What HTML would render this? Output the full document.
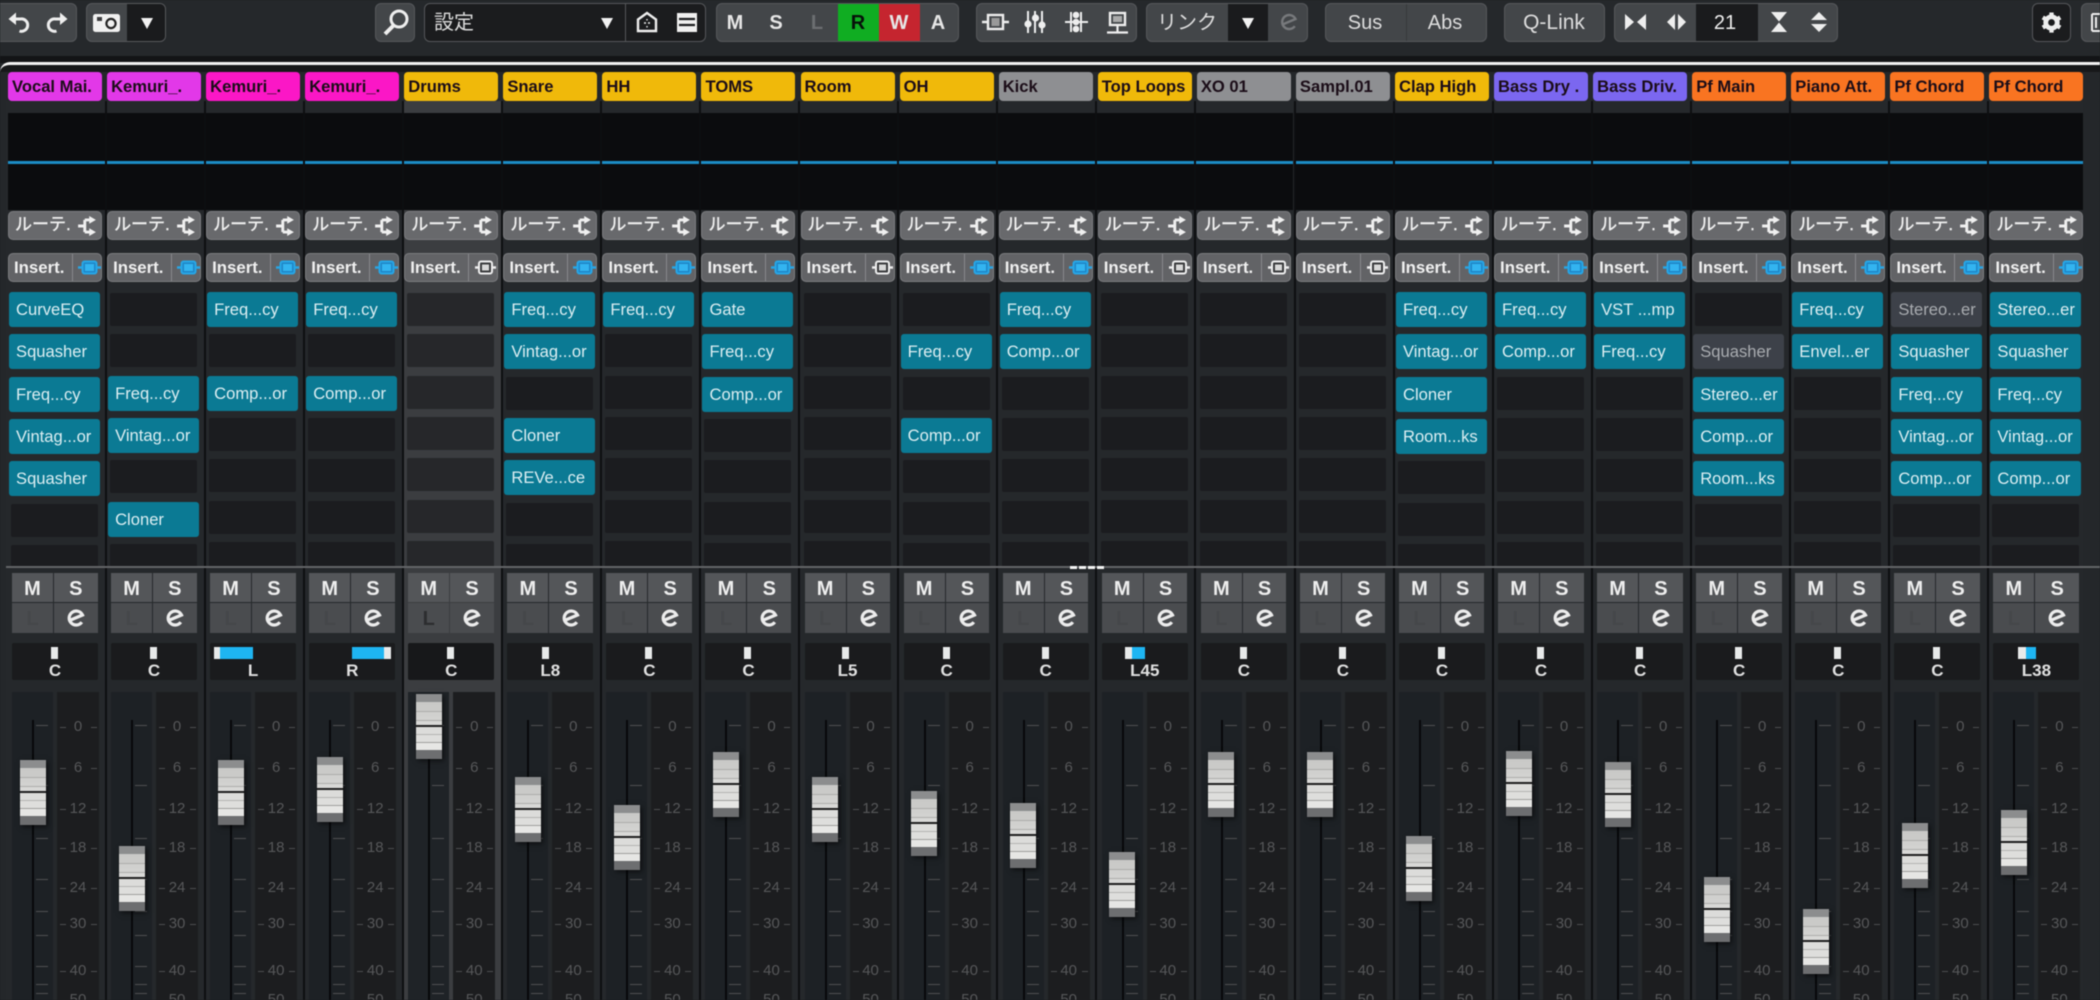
<!DOCTYPE html>
<html><head><meta charset="utf-8"><style>
html,body{margin:0;padding:0;background:#1c1e21}
#a{position:relative;width:2100px;height:1000px;overflow:hidden;background:#24272a;font-family:"Liberation Sans","Noto Sans CJK JP",sans-serif;filter:blur(.45px)}
#top{position:absolute;left:0;top:0;width:2100px;height:56px;background:#25282b}
#dk{position:absolute;left:0;top:56px;width:2100px;height:7px;background:#131416}
#wl{position:absolute;left:0;top:62px;width:2100px;height:10px;border-top:3px solid #f2f2f2;border-top-left-radius:10px;box-sizing:border-box;background:#17181a}
.g{position:absolute;top:3px;height:39px;box-sizing:border-box;background:#434649;border:1px solid #56585b;border-radius:6px;color:#e6e6e6;overflow:hidden}
.g svg,.ab{position:absolute}
.tx{position:absolute;top:0;line-height:38px;font-size:20px;transform:translateX(-50%);white-space:nowrap}
.bd{font-weight:bold}
.dkb{position:absolute;top:0;bottom:0;background:#1a1b1d}
.c{position:absolute;top:0;width:99.07px;height:1000px}
.st{position:absolute;left:5.6px;right:-5.6px;top:101px;bottom:0;background:#25282b;border-left:2px solid #0d0e10;box-sizing:border-box}
.c.d .st{background:#3b3d40}
.n{position:absolute;left:8px;top:72px;width:94px;height:29px;border-radius:4px;font:bold 16.6px/30px "Liberation Sans",sans-serif;color:#1b0d18;padding-left:4px;box-sizing:border-box;white-space:nowrap;overflow:hidden}
.mt{position:absolute;left:7.6px;right:-5.6px;top:113px;height:97px;background:#0b0c0e}
.bl{position:absolute;left:7.6px;right:-5.6px;top:161px;height:3px;background:#1c8cc4}
.r,.i{position:absolute;left:8px;width:94px;box-sizing:border-box;border:1px solid #7b7c7f;border-radius:5px;color:#f0f0f0;white-space:nowrap}
.r{top:211px;height:29px;background:#68696c;font-size:17px;line-height:26px;padding-left:6px;-webkit-text-stroke:.4px #f0f0f0}
.i{top:253px;height:29px;background:#626366;font-size:16.8px;font-weight:bold;line-height:27px;padding-left:5px}
.i:after{content:"";position:absolute;left:63px;top:0;bottom:0;width:1px;background:#87888b}
.r svg{position:absolute;left:69px;top:4px;width:18px;height:20px}
.i svg{position:absolute;left:69px;top:6px;width:23px;height:15px}
.sl{position:absolute;left:9px;top:292px;width:91px;height:273.5px;overflow:hidden}
.sl p{margin:0 0 7.33px 2px;height:33px;width:87px;margin-top:1px;background:#1b1c1f;border-radius:2px;box-sizing:border-box;margin-bottom:8.33px}
.sl p.t{margin:0 0 7.33px 0;height:35px;width:91px;background:#0b7a94;border-radius:3px;color:#dceef2;font-size:16.6px;line-height:36px;padding-left:7px;white-space:nowrap;overflow:hidden}
.sl p.y{margin:0 0 7.33px 0;height:35px;width:91px;background:#3d4149;border-radius:3px;color:#a9acb0;font-size:16.6px;line-height:36px;padding-left:7px;white-space:nowrap;overflow:hidden}
.c.d .sl p:not(.t){background:#26272a}
.ms{position:absolute;left:12px;top:573px;width:85.5px;height:60px;display:grid;grid-template-columns:41px 43.5px;grid-template-rows:29px 30px;gap:1px;font:bold 20px/32px "Liberation Sans",sans-serif;color:#eee;text-align:center}
.ms b{background:#545659;display:block;position:relative}
.ms b.l,.ms b.e{background:#4a4c4f}
.ms b.l{color:#45474a}
.c.d .ms b.l{color:#2c2d2f}
.ms svg{position:absolute;left:12px;top:6px;width:20px;height:18px}
.p{position:absolute;left:12px;top:643px;width:86px;height:37px;background:#1a1b1d;border-radius:2px;color:#e0e0e0;font:bold 17px/1 "Liberation Sans",sans-serif;text-align:center;padding-top:19px;box-sizing:border-box}
.p i{position:absolute;top:4px;height:12px;background:#e8eaea}
.p i.b{background:#1eb5f2}
.ft{position:absolute;left:12px;top:692px;width:41px;height:308px;background:linear-gradient(#07080a,#07080a) 20px 28px/2px 100% no-repeat,linear-gradient(#4f5052,#4f5052) 24px 33px/12px 1px no-repeat,linear-gradient(#4f5052,#4f5052) 24px 93px/12px 1px no-repeat,linear-gradient(#4f5052,#4f5052) 24px 146px/12px 1px no-repeat,linear-gradient(#4f5052,#4f5052) 24px 187px/12px 1px no-repeat,linear-gradient(#4f5052,#4f5052) 24px 219px/12px 1px no-repeat,linear-gradient(#4f5052,#4f5052) 24px 243px/12px 1px no-repeat,linear-gradient(#4f5052,#4f5052) 24px 274px/12px 1px no-repeat,linear-gradient(#4f5052,#4f5052) 24px 292px/12px 1px no-repeat,linear-gradient(#4f5052,#4f5052) 24px 301px/12px 1px no-repeat,#1d2125}
.sc{position:absolute;left:57px;top:692px;width:42px;height:308px;background:#1c1d1f}
.c.d .ft{background-color:#1f2327}
.sc b{position:absolute;left:0;width:42px;text-align:center;font:normal 15px/16px "Liberation Sans",sans-serif;color:#565759}
.sc b:before,.sc b:after{content:"";position:absolute;top:8px;width:6px;height:1px;background:#4c4d4f}
.sc b:before{left:3px}.sc b:after{right:2px}
.sc b:nth-child(1){top:27px}.sc b:nth-child(2){top:68px}.sc b:nth-child(3){top:109px}.sc b:nth-child(4){top:148px}.sc b:nth-child(5){top:188px}.sc b:nth-child(6){top:224px}.sc b:nth-child(7){top:271px}.sc b:nth-child(8){top:300px}
.f{position:absolute;left:19.5px;width:26px;height:65px;box-shadow:2px 2px 5px rgba(0,0,0,.55);background:linear-gradient(#8c8d8e 0,#8c8d8e 8px,#c9c9c7 8px,#cbcbc9 17px,#ababa9 17px,#ababa9 18px,#cfcfcd 18px,#d3d3d1 26px,#aeaeac 26px,#aeaeac 27px,#d8d8d6 27px,#d8d8d6 31px,#1e1e1e 31px,#1e1e1e 33px,#dcdcda 33px,#dcdcda 40px,#b4b4b2 40px,#b4b4b2 41px,#dededc 41px,#dededc 48px,#a0a09e 48px,#a0a09e 49px,#e6e6e4 49px,#e6e6e4 56px,#6d6e70 56px,#6d6e70 65px)}
#sep{position:absolute;left:6px;right:0;top:565.5px;height:2.5px;background:#626467}
#sep i{position:absolute;top:0;height:3px;width:7px;background:#f4f4f4}
</style></head><body><div id="a">
<svg width="0" height="0" style="position:absolute"><defs>
<symbol id="rt" viewBox="0 0 16 18"><path d="M0 9H6M6 3.500V14.500M6 3.500H12M6 14.500H12" stroke="#f0f0f0" stroke-width="2.600" fill="none"/><path d="M10 0L16 3.500 10 7zM10 11L16 14.500 10 18z" fill="#f0f0f0"/></symbol>
<symbol id="ib" viewBox="0 0 23 15"><rect x="4.500" y="1.500" width="14" height="12" rx="2" fill="#1f86c6" stroke="#27a6e6" stroke-width="2"/><rect x="7" y="4" width="9" height="7" fill="#33b4f0"/><path d="M0 7.500H4M19 7.500H23" stroke="#27a6e6" stroke-width="2.400"/></symbol>
<symbol id="iw" viewBox="0 0 23 15"><rect x="5" y="1.500" width="13" height="12" rx="2" fill="#3a3b3d" stroke="#eee" stroke-width="2"/><rect x="8" y="4.500" width="7" height="6" fill="#d8d8d8"/><path d="M1 7.500H5M18 7.500H22" stroke="#eee" stroke-width="2.400"/></symbol>
<symbol id="e" viewBox="0 0 20 18"><path d="M3.500 11.500L16.500 6A7 7 0 1 0 15.800 13.200" fill="none" stroke="#ececec" stroke-width="3.200"/></symbol>
</defs></svg>
<div id="top"></div><div id="dk"></div><div id="wl"></div>

<div class="g" style="left:-6px;width:83px"></div>
<svg class="ab" style="left:7px;top:10px" width="24" height="24" viewBox="0 0 24 24"><path d="M7 9H13.500A6.200 6.200 0 1 1 12.500 21" fill="none" stroke="#eee" stroke-width="3"/><path d="M9 2.500V15L1.500 9z" fill="#eee"/></svg>
<svg class="ab" style="left:45px;top:10px" width="24" height="24" viewBox="0 0 24 24"><path d="M17 9H10.500A6.200 6.200 0 1 0 11.500 21" fill="none" stroke="#eee" stroke-width="3"/><path d="M15 2.500V15L22.500 9z" fill="#eee"/></svg>
<div class="g" style="left:86px;width:80px"><div class="dkb" style="left:40px;right:0"></div></div>
<svg class="ab" style="left:93px;top:14px" width="27" height="18" viewBox="0 0 27 18"><rect width="27" height="18" rx="2.500" fill="#f0f0f0"/><rect x="4" y="3" width="5" height="4" fill="#3a3b3d"/><circle cx="18" cy="9.500" r="4.600" fill="#f0f0f0" stroke="#222" stroke-width="2.200"/></svg>
<svg class="ab" style="left:141px;top:18px" width="12" height="11" viewBox="0 0 12 11"><path d="M0 0H12L6 11z" fill="#f2f2f2"/></svg>
<div class="g" style="left:375px;width:40px"></div>
<svg class="ab" style="left:382px;top:8px" width="27" height="28" viewBox="0 0 27 28"><circle cx="17" cy="11" r="8" fill="none" stroke="#eee" stroke-width="3"/><path d="M11 18L3 26" stroke="#eee" stroke-width="4"/></svg>
<div class="g" style="left:424px;width:282px;background:#1b1c1e;border-color:#55575a"><div class="ab" style="left:200px;top:0;bottom:0;width:1px;background:#55575a"></div><div class="tx" style="left:29px;font-size:20px;color:#ddd">設定</div></div>
<svg class="ab" style="left:601px;top:18px" width="12" height="11" viewBox="0 0 12 11"><path d="M0 0H12L6 11z" fill="#f2f2f2"/></svg>
<svg class="ab" style="left:636px;top:11px" width="22" height="22" viewBox="0 0 22 22"><path d="M2 8.500L11 2 20 8.500V20H2z" fill="#1b1c1e" stroke="#eee" stroke-width="2.400"/><path d="M8 12H10M12 12H14M11 8V9.500M11 15V16.500" stroke="#eee" stroke-width="1.400"/></svg>
<svg class="ab" style="left:677px;top:13px" width="20" height="19" viewBox="0 0 20 19"><rect width="20" height="19" fill="#f0f0f0"/><path d="M2 6H18M2 12H18" stroke="#1b1c1e" stroke-width="2.200"/></svg>

<div class="g" style="left:716px;width:243px"><div class="dkb" style="left:121px;width:41px;background:#10ad22"></div><div class="dkb" style="left:162px;width:41px;background:#c5252f"></div>
<div class="tx bd" style="left:18px">M</div><div class="tx bd" style="left:59px">S</div><div class="tx bd" style="left:100px;color:#6c6e71">L</div><div class="tx bd" style="left:141px;color:#07120a">R</div><div class="tx bd" style="left:182px">W</div><div class="tx bd" style="left:221px">A</div></div>

<div class="g" style="left:976px;width:161px"></div>
<svg class="ab" style="left:980px;top:8px" width="150" height="28" viewBox="980 8 150 28" fill="none" stroke="#eee">
<rect x="988" y="15" width="15" height="14" stroke-width="2.400"/><rect x="991.500" y="18" width="8" height="8" fill="#999" stroke-width="0"/><path d="M982 22H988M1003 22H1009" stroke-width="2.400"/>
<path d="M1028 11V33M1035 11V33M1042 11V33" stroke-width="2"/><g fill="#eee" stroke="none"><circle cx="1028" cy="24" r="3.600"/><circle cx="1035.500" cy="18" r="3.600"/><circle cx="1042" cy="25" r="3.600"/></g>
<path d="M1065 22H1088M1071 12V32M1081 12V32" stroke-width="2"/><g fill="#eee" stroke="none"><circle cx="1076" cy="15" r="3.300"/><circle cx="1076" cy="22" r="3.300"/><circle cx="1076" cy="29" r="3.300"/></g>
<rect x="1110" y="13" width="15" height="12" stroke-width="2.400"/><rect x="1113" y="16" width="9" height="6" fill="#aaa" stroke="none"/><path d="M1117.500 25V32M1107 32.500H1128" stroke-width="2.200"/></svg>

<div class="g" style="left:1146px;width:162px"><div class="dkb" style="left:81px;width:40px"></div><div class="tx" style="left:40px;color:#ddd">リンク</div></div>
<svg class="ab" style="left:1242px;top:18px" width="12" height="11" viewBox="0 0 12 11"><path d="M0 0H12L6 11z" fill="#f2f2f2"/></svg>
<svg class="ab" style="left:1279px;top:12px" width="20" height="20" viewBox="0 0 20 18"><path d="M3.500 11.500L16.500 6A7 7 0 1 0 15.800 13.200" fill="none" stroke="#77797c" stroke-width="2.400"/></svg>

<div class="g" style="left:1325px;width:162px"><div class="ab" style="left:80px;top:0;bottom:0;width:1px;background:#37393c"></div><div class="tx" style="left:39px;color:#ddd">Sus</div><div class="tx" style="left:119px;color:#ddd">Abs</div></div>
<div class="g" style="left:1504px;width:101px"><div class="tx" style="left:49px;font-size:21px;color:#ddd">Q-Link</div></div>
<div class="g" style="left:1614px;width:224px"><div class="dkb" style="left:81px;width:62px"></div><div class="tx" style="left:110px;color:#eee">21</div></div>
<svg class="ab" style="left:1624px;top:12px" width="24" height="20" viewBox="0 0 24 20" fill="#eee"><path d="M1 2L10 10 1 18zM22 2L13 10 22 18z"/></svg>
<svg class="ab" style="left:1665px;top:12px" width="24" height="20" viewBox="0 0 24 20" fill="#eee"><path d="M10 2L2 10 10 18zM13 2L21 10 13 18z"/></svg>
<svg class="ab" style="left:1769px;top:11px" width="20" height="22" viewBox="0 0 20 22" fill="#eee"><path d="M2 1H18L10 10.500zM2 21H18L10 11.500z"/></svg>
<svg class="ab" style="left:1811px;top:11px" width="16" height="22" viewBox="0 0 16 22" fill="#eee"><path d="M8 1L16 9H0zM8 21L16 13H0z"/></svg>
<div class="g" style="left:2032px;width:39px;background:#1b1c1e;border-color:#55575a"></div>
<svg class="ab" style="left:2040px;top:11px" width="23" height="23" viewBox="0 0 24 24"><circle cx="12" cy="12" r="6" fill="none" stroke="#eee" stroke-width="5"/><path d="M12 1.500V6M12 18V22.500M2.900 6.700L6.800 9M17.200 15L21.100 17.300M2.900 17.300L6.800 15M17.200 9L21.100 6.700" stroke="#eee" stroke-width="4.500"/></svg>
<div class="g" style="left:2081px;width:40px"></div>
<svg class="ab" style="left:2091px;top:13px" width="10" height="19" viewBox="0 0 10 19"><path d="M1 1H10M1 18H10M1 1V18" stroke="#eee" stroke-width="2" fill="none"/><path d="M5 4V15" stroke="#eee" stroke-width="2"/></svg>

<div class="c" style="left:0px"><div class="st" style="border-left:0"></div><div class="n" style="background:#e238e8">Vocal Mai.</div><div class="mt"></div><div class="bl"></div><div class="r">ルーテ.<svg><use href="#rt"/></svg></div><div class="i">Insert.<svg><use href="#ib"/></svg></div><div class="sl"><p class="t">CurveEQ</p><p class="t">Squasher</p><p class="t">Freq...cy</p><p class="t">Vintag...or</p><p class="t">Squasher</p><p></p><p></p></div><div class="ms"><b>M</b><b>S</b><b class="l">L</b><b class="e"><svg><use href="#e"/></svg></b></div><div class="p"><i style="left:39px;width:7px"></i>C</div><div class="ft"></div><div class="sc"><b>0</b><b>6</b><b>12</b><b>18</b><b>24</b><b>30</b><b>40</b><b>50</b></div><div class="f" style="top:760px"></div></div>

<div class="c" style="left:99.07px"><div class="st"></div><div class="n" style="background:#e238e8">Kemuri_.</div><div class="mt"></div><div class="bl"></div><div class="r">ルーテ.<svg><use href="#rt"/></svg></div><div class="i">Insert.<svg><use href="#ib"/></svg></div><div class="sl"><p></p><p></p><p class="t">Freq...cy</p><p class="t">Vintag...or</p><p></p><p class="t">Cloner</p><p></p></div><div class="ms"><b>M</b><b>S</b><b class="l">L</b><b class="e"><svg><use href="#e"/></svg></b></div><div class="p"><i style="left:39px;width:7px"></i>C</div><div class="ft"></div><div class="sc"><b>0</b><b>6</b><b>12</b><b>18</b><b>24</b><b>30</b><b>40</b><b>50</b></div><div class="f" style="top:846px"></div></div>

<div class="c" style="left:198.14px"><div class="st"></div><div class="n" style="background:#fb17c6">Kemuri_.</div><div class="mt"></div><div class="bl"></div><div class="r">ルーテ.<svg><use href="#rt"/></svg></div><div class="i">Insert.<svg><use href="#ib"/></svg></div><div class="sl"><p class="t">Freq...cy</p><p></p><p class="t">Comp...or</p><p></p><p></p><p></p><p></p></div><div class="ms"><b>M</b><b>S</b><b class="l">L</b><b class="e"><svg><use href="#e"/></svg></b></div><div class="p"><i style="left:4px;width:6px"></i><i class="b" style="left:10px;width:33px"></i>L</div><div class="ft"></div><div class="sc"><b>0</b><b>6</b><b>12</b><b>18</b><b>24</b><b>30</b><b>40</b><b>50</b></div><div class="f" style="top:760px"></div></div>

<div class="c" style="left:297.21px"><div class="st"></div><div class="n" style="background:#fb17c6">Kemuri_.</div><div class="mt"></div><div class="bl"></div><div class="r">ルーテ.<svg><use href="#rt"/></svg></div><div class="i">Insert.<svg><use href="#ib"/></svg></div><div class="sl"><p class="t">Freq...cy</p><p></p><p class="t">Comp...or</p><p></p><p></p><p></p><p></p></div><div class="ms"><b>M</b><b>S</b><b class="l">L</b><b class="e"><svg><use href="#e"/></svg></b></div><div class="p"><i class="b" style="left:43px;width:32px"></i><i style="left:75px;width:7px"></i>R</div><div class="ft"></div><div class="sc"><b>0</b><b>6</b><b>12</b><b>18</b><b>24</b><b>30</b><b>40</b><b>50</b></div><div class="f" style="top:757px"></div></div>

<div class="c d" style="left:396.28px"><div class="st"></div><div class="n" style="background:#f0b90a">Drums</div><div class="mt"></div><div class="bl"></div><div class="r">ルーテ.<svg><use href="#rt"/></svg></div><div class="i">Insert.<svg><use href="#iw"/></svg></div><div class="sl"><p></p><p></p><p></p><p></p><p></p><p></p><p></p></div><div class="ms"><b>M</b><b>S</b><b class="l">L</b><b class="e"><svg><use href="#e"/></svg></b></div><div class="p" style="background:#17181a"><i style="left:39px;width:7px"></i>C</div><div class="ft"></div><div class="sc"><b>0</b><b>6</b><b>12</b><b>18</b><b>24</b><b>30</b><b>40</b><b>50</b></div><div class="f" style="top:694px"></div></div>

<div class="c" style="left:495.35px"><div class="st"></div><div class="n" style="background:#f0b90a">Snare</div><div class="mt"></div><div class="bl"></div><div class="r">ルーテ.<svg><use href="#rt"/></svg></div><div class="i">Insert.<svg><use href="#ib"/></svg></div><div class="sl"><p class="t">Freq...cy</p><p class="t">Vintag...or</p><p></p><p class="t">Cloner</p><p class="t">REVe...ce</p><p></p><p></p></div><div class="ms"><b>M</b><b>S</b><b class="l">L</b><b class="e"><svg><use href="#e"/></svg></b></div><div class="p"><i style="left:35px;width:7px"></i>L8</div><div class="ft"></div><div class="sc"><b>0</b><b>6</b><b>12</b><b>18</b><b>24</b><b>30</b><b>40</b><b>50</b></div><div class="f" style="top:777px"></div></div>

<div class="c" style="left:594.42px"><div class="st"></div><div class="n" style="background:#f0b90a">HH</div><div class="mt"></div><div class="bl"></div><div class="r">ルーテ.<svg><use href="#rt"/></svg></div><div class="i">Insert.<svg><use href="#ib"/></svg></div><div class="sl"><p class="t">Freq...cy</p><p></p><p></p><p></p><p></p><p></p><p></p></div><div class="ms"><b>M</b><b>S</b><b class="l">L</b><b class="e"><svg><use href="#e"/></svg></b></div><div class="p"><i style="left:39px;width:7px"></i>C</div><div class="ft"></div><div class="sc"><b>0</b><b>6</b><b>12</b><b>18</b><b>24</b><b>30</b><b>40</b><b>50</b></div><div class="f" style="top:805px"></div></div>

<div class="c" style="left:693.49px"><div class="st"></div><div class="n" style="background:#f0b90a">TOMS</div><div class="mt"></div><div class="bl"></div><div class="r">ルーテ.<svg><use href="#rt"/></svg></div><div class="i">Insert.<svg><use href="#ib"/></svg></div><div class="sl"><p class="t">Gate</p><p class="t">Freq...cy</p><p class="t">Comp...or</p><p></p><p></p><p></p><p></p></div><div class="ms"><b>M</b><b>S</b><b class="l">L</b><b class="e"><svg><use href="#e"/></svg></b></div><div class="p"><i style="left:39px;width:7px"></i>C</div><div class="ft"></div><div class="sc"><b>0</b><b>6</b><b>12</b><b>18</b><b>24</b><b>30</b><b>40</b><b>50</b></div><div class="f" style="top:752px"></div></div>

<div class="c" style="left:792.56px"><div class="st"></div><div class="n" style="background:#f0b90a">Room</div><div class="mt"></div><div class="bl"></div><div class="r">ルーテ.<svg><use href="#rt"/></svg></div><div class="i">Insert.<svg><use href="#iw"/></svg></div><div class="sl"><p></p><p></p><p></p><p></p><p></p><p></p><p></p></div><div class="ms"><b>M</b><b>S</b><b class="l">L</b><b class="e"><svg><use href="#e"/></svg></b></div><div class="p"><i style="left:37px;width:7px"></i>L5</div><div class="ft"></div><div class="sc"><b>0</b><b>6</b><b>12</b><b>18</b><b>24</b><b>30</b><b>40</b><b>50</b></div><div class="f" style="top:777px"></div></div>

<div class="c" style="left:891.63px"><div class="st"></div><div class="n" style="background:#f0b90a">OH</div><div class="mt"></div><div class="bl"></div><div class="r">ルーテ.<svg><use href="#rt"/></svg></div><div class="i">Insert.<svg><use href="#ib"/></svg></div><div class="sl"><p></p><p class="t">Freq...cy</p><p></p><p class="t">Comp...or</p><p></p><p></p><p></p></div><div class="ms"><b>M</b><b>S</b><b class="l">L</b><b class="e"><svg><use href="#e"/></svg></b></div><div class="p"><i style="left:39px;width:7px"></i>C</div><div class="ft"></div><div class="sc"><b>0</b><b>6</b><b>12</b><b>18</b><b>24</b><b>30</b><b>40</b><b>50</b></div><div class="f" style="top:791px"></div></div>

<div class="c" style="left:990.7px"><div class="st"></div><div class="n" style="background:#8e8f92">Kick</div><div class="mt"></div><div class="bl"></div><div class="r">ルーテ.<svg><use href="#rt"/></svg></div><div class="i">Insert.<svg><use href="#ib"/></svg></div><div class="sl"><p class="t">Freq...cy</p><p class="t">Comp...or</p><p></p><p></p><p></p><p></p><p></p></div><div class="ms"><b>M</b><b>S</b><b class="l">L</b><b class="e"><svg><use href="#e"/></svg></b></div><div class="p"><i style="left:39px;width:7px"></i>C</div><div class="ft"></div><div class="sc"><b>0</b><b>6</b><b>12</b><b>18</b><b>24</b><b>30</b><b>40</b><b>50</b></div><div class="f" style="top:803px"></div></div>

<div class="c" style="left:1089.77px"><div class="st"></div><div class="n" style="background:#f0b90a">Top Loops</div><div class="mt"></div><div class="bl"></div><div class="r">ルーテ.<svg><use href="#rt"/></svg></div><div class="i">Insert.<svg><use href="#iw"/></svg></div><div class="sl"><p></p><p></p><p></p><p></p><p></p><p></p><p></p></div><div class="ms"><b>M</b><b>S</b><b class="l">L</b><b class="e"><svg><use href="#e"/></svg></b></div><div class="p"><i style="left:23px;width:7px"></i><i class="b" style="left:30px;width:13px"></i>L45</div><div class="ft"></div><div class="sc"><b>0</b><b>6</b><b>12</b><b>18</b><b>24</b><b>30</b><b>40</b><b>50</b></div><div class="f" style="top:852px"></div></div>

<div class="c" style="left:1188.84px"><div class="st"></div><div class="n" style="background:#8e8f92">XO 01</div><div class="mt"></div><div class="bl"></div><div class="r">ルーテ.<svg><use href="#rt"/></svg></div><div class="i">Insert.<svg><use href="#iw"/></svg></div><div class="sl"><p></p><p></p><p></p><p></p><p></p><p></p><p></p></div><div class="ms"><b>M</b><b>S</b><b class="l">L</b><b class="e"><svg><use href="#e"/></svg></b></div><div class="p"><i style="left:39px;width:7px"></i>C</div><div class="ft"></div><div class="sc"><b>0</b><b>6</b><b>12</b><b>18</b><b>24</b><b>30</b><b>40</b><b>50</b></div><div class="f" style="top:752px"></div></div>

<div class="c" style="left:1287.91px"><div class="st"></div><div class="n" style="background:#8e8f92">Sampl.01</div><div class="mt"></div><div class="bl"></div><div class="r">ルーテ.<svg><use href="#rt"/></svg></div><div class="i">Insert.<svg><use href="#iw"/></svg></div><div class="sl"><p></p><p></p><p></p><p></p><p></p><p></p><p></p></div><div class="ms"><b>M</b><b>S</b><b class="l">L</b><b class="e"><svg><use href="#e"/></svg></b></div><div class="p"><i style="left:39px;width:7px"></i>C</div><div class="ft"></div><div class="sc"><b>0</b><b>6</b><b>12</b><b>18</b><b>24</b><b>30</b><b>40</b><b>50</b></div><div class="f" style="top:752px"></div></div>

<div class="c" style="left:1386.98px"><div class="st"></div><div class="n" style="background:#f0b90a">Clap High</div><div class="mt"></div><div class="bl"></div><div class="r">ルーテ.<svg><use href="#rt"/></svg></div><div class="i">Insert.<svg><use href="#ib"/></svg></div><div class="sl"><p class="t">Freq...cy</p><p class="t">Vintag...or</p><p class="t">Cloner</p><p class="t">Room...ks</p><p></p><p></p><p></p></div><div class="ms"><b>M</b><b>S</b><b class="l">L</b><b class="e"><svg><use href="#e"/></svg></b></div><div class="p"><i style="left:39px;width:7px"></i>C</div><div class="ft"></div><div class="sc"><b>0</b><b>6</b><b>12</b><b>18</b><b>24</b><b>30</b><b>40</b><b>50</b></div><div class="f" style="top:836px"></div></div>

<div class="c" style="left:1486.05px"><div class="st"></div><div class="n" style="background:#7b67f0">Bass Dry .</div><div class="mt"></div><div class="bl"></div><div class="r">ルーテ.<svg><use href="#rt"/></svg></div><div class="i">Insert.<svg><use href="#ib"/></svg></div><div class="sl"><p class="t">Freq...cy</p><p class="t">Comp...or</p><p></p><p></p><p></p><p></p><p></p></div><div class="ms"><b>M</b><b>S</b><b class="l">L</b><b class="e"><svg><use href="#e"/></svg></b></div><div class="p"><i style="left:39px;width:7px"></i>C</div><div class="ft"></div><div class="sc"><b>0</b><b>6</b><b>12</b><b>18</b><b>24</b><b>30</b><b>40</b><b>50</b></div><div class="f" style="top:751px"></div></div>

<div class="c" style="left:1585.12px"><div class="st"></div><div class="n" style="background:#7b67f0">Bass Driv.</div><div class="mt"></div><div class="bl"></div><div class="r">ルーテ.<svg><use href="#rt"/></svg></div><div class="i">Insert.<svg><use href="#ib"/></svg></div><div class="sl"><p class="t">VST ...mp</p><p class="t">Freq...cy</p><p></p><p></p><p></p><p></p><p></p></div><div class="ms"><b>M</b><b>S</b><b class="l">L</b><b class="e"><svg><use href="#e"/></svg></b></div><div class="p"><i style="left:39px;width:7px"></i>C</div><div class="ft"></div><div class="sc"><b>0</b><b>6</b><b>12</b><b>18</b><b>24</b><b>30</b><b>40</b><b>50</b></div><div class="f" style="top:762px"></div></div>

<div class="c" style="left:1684.19px"><div class="st"></div><div class="n" style="background:#f97421">Pf Main</div><div class="mt"></div><div class="bl"></div><div class="r">ルーテ.<svg><use href="#rt"/></svg></div><div class="i">Insert.<svg><use href="#ib"/></svg></div><div class="sl"><p></p><p class="y">Squasher</p><p class="t">Stereo...er</p><p class="t">Comp...or</p><p class="t">Room...ks</p><p></p><p></p></div><div class="ms"><b>M</b><b>S</b><b class="l">L</b><b class="e"><svg><use href="#e"/></svg></b></div><div class="p"><i style="left:39px;width:7px"></i>C</div><div class="ft"></div><div class="sc"><b>0</b><b>6</b><b>12</b><b>18</b><b>24</b><b>30</b><b>40</b><b>50</b></div><div class="f" style="top:877px"></div></div>

<div class="c" style="left:1783.26px"><div class="st"></div><div class="n" style="background:#f97421">Piano Att.</div><div class="mt"></div><div class="bl"></div><div class="r">ルーテ.<svg><use href="#rt"/></svg></div><div class="i">Insert.<svg><use href="#ib"/></svg></div><div class="sl"><p class="t">Freq...cy</p><p class="t">Envel...er</p><p></p><p></p><p></p><p></p><p></p></div><div class="ms"><b>M</b><b>S</b><b class="l">L</b><b class="e"><svg><use href="#e"/></svg></b></div><div class="p"><i style="left:39px;width:7px"></i>C</div><div class="ft"></div><div class="sc"><b>0</b><b>6</b><b>12</b><b>18</b><b>24</b><b>30</b><b>40</b><b>50</b></div><div class="f" style="top:909px"></div></div>

<div class="c" style="left:1882.33px"><div class="st"></div><div class="n" style="background:#f97421">Pf Chord</div><div class="mt"></div><div class="bl"></div><div class="r">ルーテ.<svg><use href="#rt"/></svg></div><div class="i">Insert.<svg><use href="#ib"/></svg></div><div class="sl"><p class="y">Stereo...er</p><p class="t">Squasher</p><p class="t">Freq...cy</p><p class="t">Vintag...or</p><p class="t">Comp...or</p><p></p><p></p></div><div class="ms"><b>M</b><b>S</b><b class="l">L</b><b class="e"><svg><use href="#e"/></svg></b></div><div class="p"><i style="left:39px;width:7px"></i>C</div><div class="ft"></div><div class="sc"><b>0</b><b>6</b><b>12</b><b>18</b><b>24</b><b>30</b><b>40</b><b>50</b></div><div class="f" style="top:823px"></div></div>

<div class="c" style="left:1981.4px"><div class="st" style="right:-3px"></div><div class="n" style="background:#f97421">Pf Chord</div><div class="mt" style="right:-3px"></div><div class="bl" style="right:-3px"></div><div class="r">ルーテ.<svg><use href="#rt"/></svg></div><div class="i">Insert.<svg><use href="#ib"/></svg></div><div class="sl"><p class="t">Stereo...er</p><p class="t">Squasher</p><p class="t">Freq...cy</p><p class="t">Vintag...or</p><p class="t">Comp...or</p><p></p><p></p></div><div class="ms"><b>M</b><b>S</b><b class="l">L</b><b class="e"><svg><use href="#e"/></svg></b></div><div class="p"><i style="left:25px;width:8px"></i><i class="b" style="left:33px;width:10px"></i>L38</div><div class="ft"></div><div class="sc"><b>0</b><b>6</b><b>12</b><b>18</b><b>24</b><b>30</b><b>40</b><b>50</b></div><div class="f" style="top:810px"></div></div>

<div id="sep"><i style="left:1064px"></i><i style="left:1073px"></i><i style="left:1082px"></i><i style="left:1091px"></i></div>
</div></body></html>
